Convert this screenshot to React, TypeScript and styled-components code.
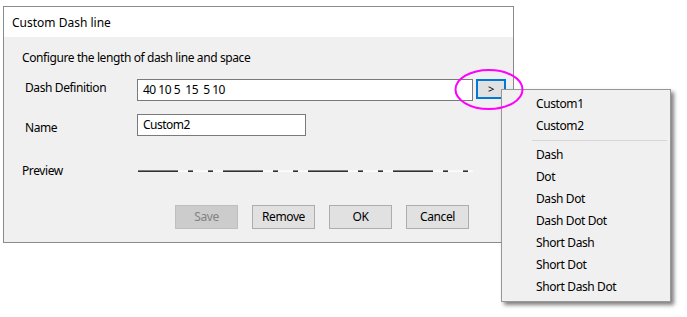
import React from "react";
import styled, { createGlobalStyle } from "styled-components";

const Global = createGlobalStyle`
  html, body { margin: 0; padding: 0; background: #ffffff; }
  body { font-family: "Noto Sans", "Segoe UI", sans-serif; font-size: 12px; color: #000; letter-spacing: -0.4px; }
`;

const Canvas = styled.div`
  position: relative;
  width: 687px;
  height: 317px;
  overflow: hidden;
  background: #ffffff;
  padding: 6px 0 0 3px;
  box-sizing: border-box;
`;

const Dialog = styled.div`
  width: 511px;
  height: 237px;
  box-sizing: border-box;
  border: 1px solid #8a8a8a;
  display: flex;
  flex-direction: column;
  background: #f0f0f0;
`;

const TitleBar = styled.div`
  height: 30px;
  background: #ffffff;
  padding: 8px 0 0 8px;
  box-sizing: border-box;
  line-height: 16px;
  letter-spacing: 0;
`;

const Body = styled.div`
  flex: 1;
  display: flex;
  flex-direction: column;
  padding: 13px 0 0 18px;
`;

const Text = styled.div`
  line-height: 16px;
  white-space: nowrap;
`;

const Row = styled.div<{ $mt: number }>`
  display: flex;
  align-items: flex-start;
  margin-top: ${(p) => p.$mt}px;
`;

const Label = styled.div<{ $indent?: number; $top?: number }>`
  width: 115px;
  flex: none;
  box-sizing: border-box;
  padding-left: ${(p) => p.$indent ?? 0}px;
  margin-top: ${(p) => p.$top ?? 0}px;
  line-height: 16px;
  white-space: nowrap;
`;

const Field = styled.div<{ $w: number }>`
  width: ${(p) => p.$w}px;
  height: 22px;
  box-sizing: border-box;
  border: 1px solid #7a7a7a;
  background: #ffffff;
  padding: 0 0 0 5px;
  line-height: 20px;
  white-space: pre;
  letter-spacing: -0.5px;
`;

const ArrowButton = styled.div`
  width: 30px;
  height: 20px;
  margin-left: 3px;
  box-sizing: border-box;
  border: 2px solid #0078d7;
  background: #e1e1e1;
  display: flex;
  align-items: center;
  justify-content: center;
  font-size: 11px;
  line-height: 14px;
`;

const PreviewLine = styled.svg`
  display: block;
  margin-left: 1px;
`;

const ButtonRow = styled.div`
  display: flex;
  gap: 14px;
  margin-top: 26px;
  padding-left: 153px;
`;

const Button = styled.div<{ $disabled?: boolean }>`
  width: 63px;
  height: 24px;
  box-sizing: border-box;
  border: 1px solid ${(p) => (p.$disabled ? "#bfbfbf" : "#adadad")};
  background: ${(p) => (p.$disabled ? "#cccccc" : "#e1e1e1")};
  color: ${(p) => (p.$disabled ? "#838383" : "#000000")};
  display: flex;
  align-items: center;
  justify-content: center;
  line-height: 16px;
`;

const Menu = styled.div`
  position: absolute;
  left: 501px;
  top: 89px;
  width: 170px;
  height: 213px;
  box-sizing: border-box;
  border: 1px solid #979797;
  background: #f0f0f0;
  padding: 3px 0;
  box-shadow: 3px 3px 4px rgba(0, 0, 0, 0.5);
  display: flex;
  flex-direction: column;
`;

const MenuItem = styled.div`
  height: 22px;
  padding-left: 34px;
  display: flex;
  align-items: center;
  line-height: 16px;
  white-space: nowrap;
`;

const MenuSeparator = styled.div`
  height: 7px;
  display: flex;
  align-items: center;
  padding: 0 3px 0 30px;
  &::after {
    content: "";
    flex: 1;
    height: 1px;
    background: #d7d7d7;
  }
`;

const Annotation = styled.svg`
  position: absolute;
  left: 450px;
  top: 65px;
  pointer-events: none;
`;

const pattern = [40, 10, 5, 15, 5, 10];

function Dashes() {
  const width = 335;
  const segs: React.ReactNode[] = [];
  let x = 0;
  let i = 0;
  while (x < width) {
    const len = pattern[i % pattern.length];
    if (i % 2 === 0) {
      const end = Math.min(x + len, width);
      segs.push(<rect key={i} x={x} y={7.5} width={end - x} height={1.3} fill="#000" />);
    }
    x += len;
    i++;
  }
  return (
    <PreviewLine width={width} height={16} viewBox={`0 0 ${width} 16`}>
      <rect x={0} y={7.5} width={width} height={1.3} fill="#ffffff" />
      {segs}
    </PreviewLine>
  );
}

const menuTop = ["Custom1", "Custom2"];
const menuBottom = ["Dash", "Dot", "Dash Dot", "Dash Dot Dot", "Short Dash", "Short Dot", "Short Dash Dot"];

export default function App() {
  return (
    <>
      <Global />
      <Canvas>
        <Dialog>
          <TitleBar>Custom Dash line</TitleBar>
          <Body>
            <Text>Configure the length of dash line and space</Text>
            <Row $mt={13}>
              <Label $indent={3} $top={1}>Dash Definition</Label>
              <Field $w={336}>40 10 5  15  5 10</Field>
              <ArrowButton>&gt;</ArrowButton>
            </Row>
            <Row $mt={13}>
              <Label $indent={3} $top={6}>Name</Label>
              <Field $w={169}>Custom2</Field>
            </Row>
            <Row $mt={27}>
              <Label>Preview</Label>
              <Dashes />
            </Row>
            <ButtonRow>
              <Button $disabled>Save</Button>
              <Button>Remove</Button>
              <Button>OK</Button>
              <Button>Cancel</Button>
            </ButtonRow>
          </Body>
        </Dialog>
        <Menu>
          {menuTop.map((m) => (
            <MenuItem key={m}>{m}</MenuItem>
          ))}
          <MenuSeparator />
          {menuBottom.map((m) => (
            <MenuItem key={m}>{m}</MenuItem>
          ))}
        </Menu>
        <Annotation width={80} height={50} viewBox="0 0 80 50">
          <ellipse cx={39} cy={24.5} rx={33.5} ry={19.5} fill="none" stroke="#ff00ff" strokeWidth={2} />
        </Annotation>
      </Canvas>
    </>
  );
}
